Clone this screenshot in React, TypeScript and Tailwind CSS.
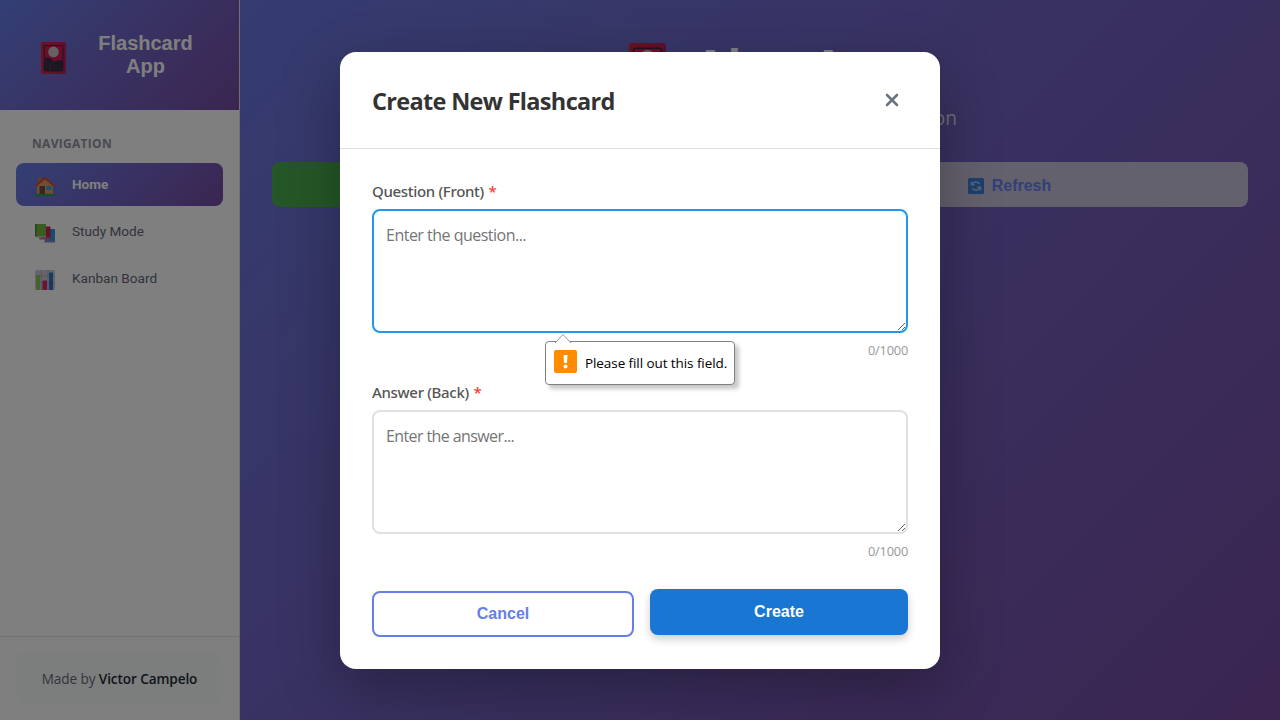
import React from "react";

function Cards({ className }: { className: string }) {
  return (
    <svg className={className} viewBox="0 0 25 32" preserveAspectRatio="none">
      <defs>
        <linearGradient id="cardEdge" x1="0" x2="1">
          <stop offset="0" stopColor="#d3283c" />
          <stop offset="1" stopColor="#b8225c" />
        </linearGradient>
      </defs>
      <rect width="25" height="32" rx="2" fill="url(#cardEdge)" />
      <rect x="2.600" y="3" width="19.800" height="26.500" rx="1.800" fill="#40234a" />
      <path d="M3.600 4h17.800v16H3.600z" fill="#d01e50" />
      <circle cx="12.500" cy="9.900" r="5.300" fill="#cdc2c9" />
      <path d="M3.600 16c4-1.500 7 0 9 4 2-1.500 6-2 8.800-1.500V28.500H3.600z" fill="#3b2d49" />
      <path d="M8.500 28c0-5 2.500-8 5-8.500" fill="none" stroke="#584361" strokeWidth="1" />
    </svg>
  );
}

function House() {
  return (
    <svg className="h-5 w-5" viewBox="0 0 20 20">
      <path d="M3 1h3v6H3z" fill="#c2764f" />
      <path d="M2 9l8-7 8 7v9H2z" fill="#d9a066" />
      <path d="M.800 10L10 2l9.200 8" fill="none" stroke="#e0472e" strokeWidth="2" />
      <path d="M4.500 10h5.500v8H4.500z" fill="#78463c" />
      <path d="M11.500 10h5v4h-5z" fill="#2fa8e6" />
      <path d="M0 17.800h20V20H0z" fill="#2e9e55" />
    </svg>
  );
}

function Books() {
  return (
    <svg className="h-5 w-5" viewBox="0 0 20 20">
      <path d="M10 6h10v13H10z" fill="#2e9bd0" />
      <path d="M9.500 17.500H20v2H9z" fill="#8f8bc4" />
      <path d="M6 3.500h9.500V16H6z" fill="#c8225c" />
      <path d="M4 14.500h11v2H4.500z" fill="#bd6f9b" />
      <path d="M0 1h11v12.500H0z" fill="#76b83e" />
      <path d="M0 1h1.500v12.500H0z" fill="#3c8f45" />
      <path d="M1 13h10v1.500H1z" fill="#b1c6a5" />
    </svg>
  );
}

function Chart() {
  return (
    <svg className="h-5 w-5" viewBox="0 0 20 20">
      <rect width="20" height="20" rx="2" fill="#d0c8da" />
      <path d="M0 6h20M0 13h20M6.500 0v20M13 0v20" stroke="#a49bb0" strokeWidth=".6" />
      <path d="M1.200 5h4v15h-4z" fill="#85c653" />
      <path d="M7.500 10.500h4.500V20H7.500z" fill="#d0286a" />
      <path d="M14 2.500h4V20h-4z" fill="#2879c0" />
    </svg>
  );
}

function RefreshIcon() {
  return (
    <svg className="h-4 w-4" viewBox="0 0 16 16">
      <rect width="16" height="16" rx="1.500" fill="#3d80dc" />
      <path d="M4 7a4 3.500 0 0 1 7.500-1.200M12 9a4 3.500 0 0 1-7.500 1.200" fill="none" stroke="#b9c8ea" strokeWidth="1.500" />
      <path d="M2.800 3v4.500h4.500zM13.200 13V8.500H8.700z" fill="#b9c8ea" />
    </svg>
  );
}

function Field({ label, placeholder, active }: { label: string; placeholder: string; active?: boolean }) {
  return (
    <div className="flex flex-col">
      <label className="font-['Noto_Sans',sans-serif] text-[15px] leading-5 font-medium tracking-[-0.32px] text-[#555]">
        {label} <span className="ml-px text-[#f44336]">*</span>
      </label>
      <textarea
        placeholder={placeholder}
        className={
          active
            ? "mt-2 h-[124px] w-full resize-y rounded-lg border-2 border-[#2196f3] p-3 text-base leading-6 tracking-[-0.51px] outline-none placeholder:text-[#757575]"
            : "mt-2 h-[124px] w-full resize-y rounded-lg border-2 border-[#e0e0e0] p-3 text-base leading-6 tracking-[-0.6px] outline-none placeholder:text-[#757575]"
        }
      />
      <div className="mt-[7px] text-right text-[12.8px] leading-5 tracking-[-0.2px] text-[#999]">0/1000</div>
    </div>
  );
}

export default function App() {
  return (
    <div className="relative h-[720px] w-[1280px] overflow-hidden font-['Open_Sans','Noto_Sans',sans-serif]">
      <div className="flex h-full bg-linear-135 from-[#667eea] to-[#764ba2]">
        <aside className="flex w-60 shrink-0 flex-col border-r border-[#e0e0e0] bg-white">
          <div className="flex h-[110px] items-center bg-linear-135 from-[#667eea] to-[#764ba2] pl-[41px] text-white">
            <Cards className="mt-[5px] h-8 w-[25px]" />
            <h2 className="ml-[25px] w-[109px] text-center font-['Liberation_Sans',sans-serif] text-[20px] leading-[23px] font-bold">
              Flashcard App
            </h2>
          </div>
          <nav className="flex flex-1 flex-col px-4 pt-6">
            <div className="mb-[9px] px-4 text-xs leading-5 font-bold tracking-[0.300px] text-[#9095a0]">NAVIGATION</div>
            <div className="flex h-[43px] items-center rounded-lg bg-linear-135 from-[#667eea] to-[#764ba2] pt-[3px] pl-[19px] font-['Roboto',sans-serif] text-[13.6px] font-bold text-white">
              <House />
              <span className="mb-[3px] ml-[17px]">Home</span>
            </div>
            <div className="mt-1 flex h-[43px] items-center pt-[3px] pl-[19px] font-['Roboto',sans-serif] text-[13.6px] text-[#64697a]">
              <Books />
              <span className="mb-[3px] ml-[17px]">Study Mode</span>
            </div>
            <div className="mt-1 flex h-[43px] items-center pt-[3px] pl-[19px] font-['Roboto',sans-serif] text-[13.6px] text-[#64697a]">
              <Chart />
              <span className="mb-[3px] ml-[17px]">Kanban Board</span>
            </div>
          </nav>
          <div className="border-t border-[#e0e0e0] p-4">
            <div className="flex h-[51px] items-center justify-center rounded-lg bg-[#f7fcfa] pt-[2px] text-[13.6px] tracking-[-0.1px] text-[#666b78]">
              <span>
                Made by <b className="font-semibold text-[#1f2937]">Victor Campelo</b>
              </span>
            </div>
          </div>
        </aside>
        <main className="flex-1 px-8 pt-[37px]">
          <div className="flex h-[60px] items-center pl-[357px] text-white">
            <Cards className="h-[48px] w-[37px]" />
            <h1 className="ml-[27px] font-['Liberation_Sans',sans-serif] text-[48px] font-bold [word-spacing:5px]">Alex App</h1>
          </div>
          <p className="mt-[7px] h-[58px] pr-[291px] text-right text-[19.2px] text-[#dcdcec]">Home Section</p>
          <div className="grid grid-cols-2 gap-4 font-['Liberation_Sans',sans-serif]">
            <div className="h-[45px] rounded-lg bg-[#4caf50]" />
            <div className="flex h-[45px] items-center justify-center gap-2 rounded-lg bg-[#c8c3dd] pt-[2px] pl-[3px] text-base font-bold text-[#667eea]">
              <RefreshIcon />
              Refresh
            </div>
          </div>
        </main>
      </div>
      <div className="absolute inset-0 flex items-start justify-center bg-black/50 pt-[52px]">
        <section className="h-[617px] w-[600px] rounded-2xl bg-white shadow-[0_20px_60px_rgba(0,0,0,0.3)]">
          <header className="flex h-[97px] items-center justify-between border-b border-[#e0e0e0] px-8">
            <h2 className="pt-1 text-[23.500px] font-bold tracking-[-0.68px] text-[#333]">Create New Flashcard</h2>
            <svg className="mr-[9px] h-[14px] w-[14px]" viewBox="0 0 14 14">
              <path d="M2 2l10 10M12 2L2 12" stroke="#6b7280" strokeWidth="2.600" strokeLinecap="round" />
            </svg>
          </header>
          <div className="px-8 pt-8">
            <Field label="Question (Front)" placeholder="Enter the question..." active />
            <div className="mt-[22px]">
              <Field label="Answer (Back)" placeholder="Enter the answer..." />
            </div>
            <div className="mt-7 flex gap-4 font-['Liberation_Sans',sans-serif] text-base font-bold">
              <button className="mt-[2px] h-[46px] w-[262px] rounded-lg border-2 border-[#667eea] text-[#667eea]">Cancel</button>
              <button className="h-[46px] flex-1 rounded-lg bg-[#1976d2] text-white shadow-[0_4px_8px_rgba(0,0,0,0.2)]">Create</button>
            </div>
          </div>
        </section>
      </div>
      <div className="absolute top-[341px] left-[545px] flex h-11 w-[190px] items-center rounded-[4px] border border-[#808080] bg-white pl-2 text-[13.5px] tracking-[-0.08px] text-black shadow-[4px_4px_4px_rgba(0,0,0,0.22)]">
        <svg className="absolute -top-[9px] left-[8px] h-[10px] w-[18px]" viewBox="0 0 18 10">
          <path d="M1 10L9 1.500 17 10" fill="#fff" stroke="#999" />
        </svg>
        <svg className="mr-2 mb-[3px] h-[23px] w-[23px]" viewBox="0 0 23 23">
          <rect width="23" height="23" rx="2" fill="#ff8c00" />
          <path d="M9.500 5h4l-.500 8h-3z" fill="#fff" />
          <circle cx="11.500" cy="16.500" r="2" fill="#fff" />
        </svg>
        <span className="whitespace-nowrap">Please fill out this field.</span>
      </div>
    </div>
  );
}
